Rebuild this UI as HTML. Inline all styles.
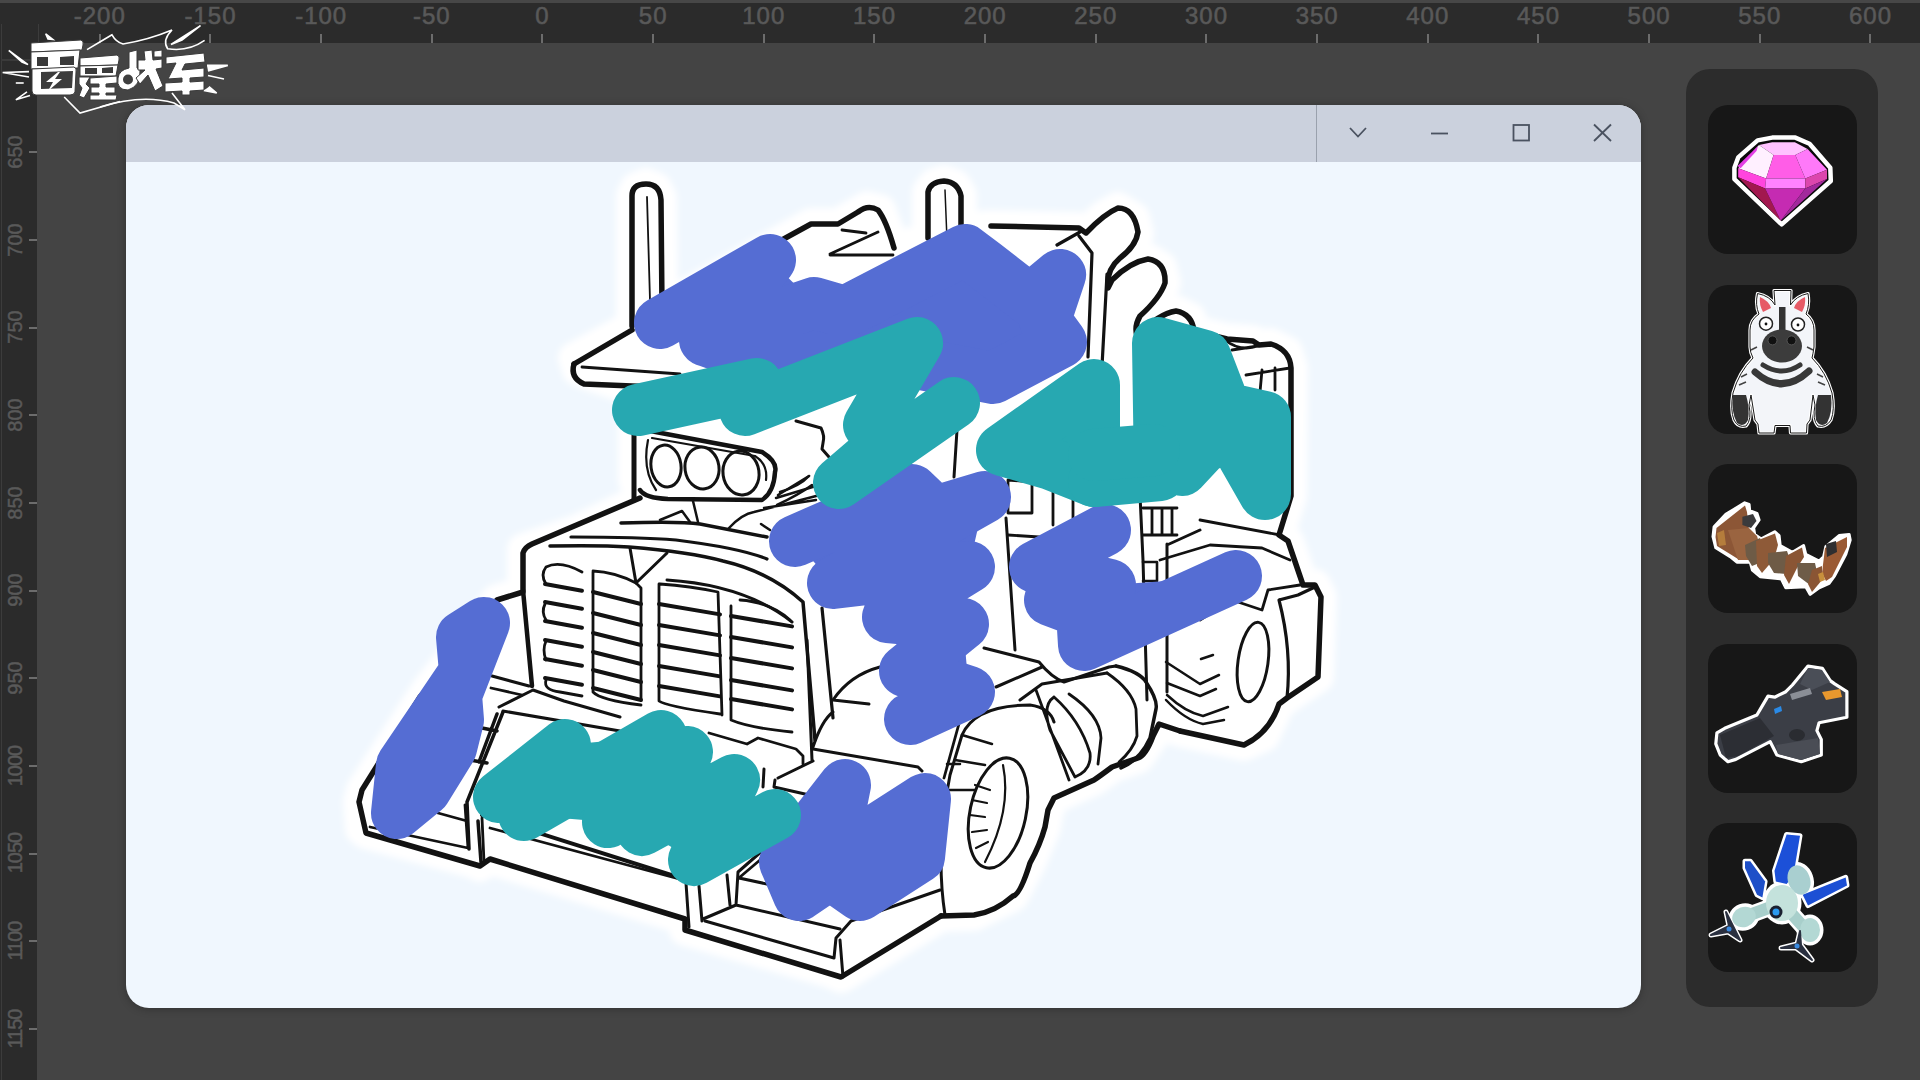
<!DOCTYPE html>
<html><head><meta charset="utf-8">
<style>
*{margin:0;padding:0;box-sizing:border-box}
html,body{width:1920px;height:1080px;overflow:hidden;background:#444444;font-family:"Liberation Sans",sans-serif}
#topbar{position:absolute;left:0;top:0;width:1920px;height:3px;background:#474747}
#rtop{position:absolute;left:0;top:3px;width:1920px;height:40px;background:#2b2b2b}
#rleft{position:absolute;left:0;top:3px;width:37px;height:1077px;background:#2b2b2b}
.tl{position:absolute;top:0px;width:80px;text-align:center;font-size:24px;letter-spacing:1px;text-indent:1px;color:#5a5a5a;line-height:26px;-webkit-text-stroke:0.6px #575757}
.tt{position:absolute;top:31px;width:2px;height:9px;background:#6c6c6c}
.ll{position:absolute;left:-25px;width:80px;height:26px;margin-top:-13px;text-align:center;font-size:20px;color:#5a5a5a;line-height:26px;transform:rotate(-90deg);-webkit-text-stroke:0.5px #575757}
.lt{position:absolute;left:29px;width:8px;height:2px;background:#6c6c6c}
#win{position:absolute;left:126px;top:105px;width:1515px;height:903px;border-radius:23px;overflow:hidden;background:#f0f7fe;box-shadow:0 1px 8px rgba(0,0,0,0.28)}
#title{position:absolute;left:0;top:0;width:1515px;height:57px;background:#cbd1dd}
#side{position:absolute;left:1686px;top:69px;width:192px;height:938px;border-radius:24px;background:#2c2c2c}
.card{position:absolute;left:22px;width:149px;height:149px;border-radius:20px;background:#171717}
svg.full{position:absolute;left:0;top:0}
</style></head><body>
<div id="topbar"></div>
<div id="rtop"><div class="tl" style="left:59.3px">-200</div><div class="tt" style="left:98.6px"></div>
<div class="tl" style="left:170.0px">-150</div><div class="tt" style="left:209.3px"></div>
<div class="tl" style="left:280.7px">-100</div><div class="tt" style="left:319.9px"></div>
<div class="tl" style="left:391.3px">-50</div><div class="tt" style="left:430.6px"></div>
<div class="tl" style="left:502.0px">0</div><div class="tt" style="left:541.2px"></div>
<div class="tl" style="left:612.7px">50</div><div class="tt" style="left:651.9px"></div>
<div class="tl" style="left:723.3px">100</div><div class="tt" style="left:762.6px"></div>
<div class="tl" style="left:834.0px">150</div><div class="tt" style="left:873.2px"></div>
<div class="tl" style="left:944.7px">200</div><div class="tt" style="left:983.9px"></div>
<div class="tl" style="left:1055.3px">250</div><div class="tt" style="left:1094.6px"></div>
<div class="tl" style="left:1166.0px">300</div><div class="tt" style="left:1205.2px"></div>
<div class="tl" style="left:1276.7px">350</div><div class="tt" style="left:1315.9px"></div>
<div class="tl" style="left:1387.3px">400</div><div class="tt" style="left:1426.6px"></div>
<div class="tl" style="left:1498.0px">450</div><div class="tt" style="left:1537.2px"></div>
<div class="tl" style="left:1608.6px">500</div><div class="tt" style="left:1647.9px"></div>
<div class="tl" style="left:1719.3px">550</div><div class="tt" style="left:1758.6px"></div>
<div class="tl" style="left:1830.0px">600</div><div class="tt" style="left:1869.2px"></div></div>
<div id="rleft">
<div class="ll" style="top:149.0px">650</div><div class="lt" style="top:148.2px"></div>
<div class="ll" style="top:236.7px">700</div><div class="lt" style="top:235.9px"></div>
<div class="ll" style="top:324.3px">750</div><div class="lt" style="top:323.6px"></div>
<div class="ll" style="top:412.0px">800</div><div class="lt" style="top:411.3px"></div>
<div class="ll" style="top:499.7px">850</div><div class="lt" style="top:498.9px"></div>
<div class="ll" style="top:587.4px">900</div><div class="lt" style="top:586.6px"></div>
<div class="ll" style="top:675.0px">950</div><div class="lt" style="top:674.3px"></div>
<div class="ll" style="top:762.7px;letter-spacing:-1px">1000</div><div class="lt" style="top:761.9px"></div>
<div class="ll" style="top:850.4px;letter-spacing:-1px">1050</div><div class="lt" style="top:849.6px"></div>
<div class="ll" style="top:938.0px;letter-spacing:-1px">1100</div><div class="lt" style="top:937.3px"></div>
<div class="ll" style="top:1025.7px;letter-spacing:-1px">1150</div><div class="lt" style="top:1025.0px"></div></div>
<div style="position:absolute;left:1px;top:24px;width:1.3px;height:1056px;background:#3c3c3c"></div><div style="position:absolute;left:37.5px;top:24px;width:1.3px;height:19px;background:#3c3c3c"></div><div style="position:absolute;left:1px;top:59px;width:30px;height:1.5px;background:#3a3a3a"></div>
<div id="win"><div id="title"></div></div>
<div id="side">
<div class="card" style="top:36px"></div>
<div class="card" style="top:216px"></div>
<div class="card" style="top:395px"></div>
<div class="card" style="top:575px"></div>
<div class="card" style="top:754px"></div>
</div>

<svg class="full" width="1920" height="1080" viewBox="0 0 1920 1080">
<defs>
<clipPath id="cv"><rect x="126" y="162" width="1515" height="846"/></clipPath>
<filter id="glow" x="-10%" y="-10%" width="120%" height="120%"><feGaussianBlur stdDeviation="3"/></filter>
</defs>

<g clip-path="url(#cv)">
<polygon points="574,358 632,326 632,196 636,188 646,184 656,188 661,198 662,308 811,224 838,224 867,207 880,210 894,248 928,238 928,192 934,184 944,181 955,185 961,195 961,228 991,226 1079,228 1086,232 1104,216 1118,208 1134,218 1138,234 1130,248 1109,269 1108,285 1130,267 1148,259 1161,267 1165,283 1158,297 1139,317 1137,334 1158,317 1176,311 1190,318 1194,331 1227,339 1253,341 1259,345 1271,344 1287,352 1292,368 1291,496 1279,535 1288,541 1303,585 1315,585 1321,597 1318,677 1287,698 1279,704 1264,736 1244,745 1180,731 1159,724 1153,736 1138,758 1112,767 1094,780 1054,798 1048,810 1045,827 1030,863 1013,896 974,915 941,916 841,977 830,972 685,930 685,919 490,859 480,866 472,862 366,833 361,829 359,802 362,790 427,690 497,600 523,592 523,549 578,530 642,499 634,480 634,390 590,375 578,370" fill="#ffffff" stroke="#ffffff" stroke-width="32" stroke-linejoin="round" filter="url(#glow)"/>
<polygon points="574,358 632,326 632,196 636,188 646,184 656,188 661,198 662,308 811,224 838,224 867,207 880,210 894,248 928,238 928,192 934,184 944,181 955,185 961,195 961,228 991,226 1079,228 1086,232 1104,216 1118,208 1134,218 1138,234 1130,248 1109,269 1108,285 1130,267 1148,259 1161,267 1165,283 1158,297 1139,317 1137,334 1158,317 1176,311 1190,318 1194,331 1227,339 1253,341 1259,345 1271,344 1287,352 1292,368 1291,496 1279,535 1288,541 1303,585 1315,585 1321,597 1318,677 1287,698 1279,704 1264,736 1244,745 1180,731 1159,724 1153,736 1138,758 1112,767 1094,780 1054,798 1048,810 1045,827 1030,863 1013,896 974,915 941,916 841,977 830,972 685,930 685,919 490,859 480,866 472,862 366,833 361,829 359,802 362,790 427,690 497,600 523,592 523,549 578,530 642,499 634,480 634,390 590,375 578,370" fill="#ffffff" stroke="#ffffff" stroke-width="22" stroke-linejoin="round"/>
<path d="M574,364 L632,330 M632,326 L632,196 Q632,184 646,184 Q660,184 661,200 L662,308" fill="none" stroke="#121212" stroke-width="5.5" stroke-linecap="round" stroke-linejoin="round"/>
<path d="M662,306 L811,224 L838,224 L858,212 Q868,204 878,210 Q886,220 894,248" fill="none" stroke="#121212" stroke-width="5.5" stroke-linecap="round" stroke-linejoin="round"/>
<path d="M574,364 Q570,378 584,384 L680,388" fill="none" stroke="#121212" stroke-width="5.5" stroke-linecap="round" stroke-linejoin="round"/>
<path d="M928,238 L928,192 Q930,182 944,181 Q958,182 961,196 L961,228" fill="none" stroke="#121212" stroke-width="5.5" stroke-linecap="round" stroke-linejoin="round"/>
<path d="M991,226 L1079,228 L1086,233 Q1104,214 1118,208 Q1134,208 1138,232 Q1136,246 1120,258 Q1106,270 1108,288 L1112,280 Q1130,262 1148,259 Q1166,262 1165,283 Q1160,298 1140,316 Q1134,326 1137,336 Q1158,314 1176,311 Q1192,314 1194,331" fill="none" stroke="#121212" stroke-width="5.5" stroke-linecap="round" stroke-linejoin="round"/>
<path d="M1194,331 L1227,339 L1253,341 L1259,345 L1271,344 Q1290,350 1291,368 L1291,496 L1279,535 L1288,541 L1303,585 L1315,585 L1321,597 L1318,677 L1287,698 L1279,704 Q1270,732 1244,745 L1180,731" fill="none" stroke="#121212" stroke-width="5.5" stroke-linecap="round" stroke-linejoin="round"/>
<path d="M1180,731 L1159,724 L1153,736 Q1146,755 1138,758 L1112,767 Q1100,776 1094,780 L1054,798 L1048,810 L1045,827 Q1040,845 1030,863 Q1020,895 1013,896 Q995,912 974,915 L941,916" fill="none" stroke="#121212" stroke-width="5.5" stroke-linecap="round" stroke-linejoin="round"/>
<path d="M941,916 L841,977 L685,930 L685,919 L490,859 L480,866 L366,833 L359,802 L362,790 L420,697 Q426,689 434,690" fill="none" stroke="#121212" stroke-width="5.5" stroke-linecap="round" stroke-linejoin="round"/>
<path d="M497,600 L523,592 L523,553 Q525,547 532,544 L640,498" fill="none" stroke="#121212" stroke-width="5.5" stroke-linecap="round" stroke-linejoin="round"/>
<path d="M523,590 L532,686" fill="none" stroke="#121212" stroke-width="4.5" stroke-linecap="round" stroke-linejoin="round"/>
<path d="M634,500 L634,390" fill="none" stroke="#121212" stroke-width="5" stroke-linecap="round" stroke-linejoin="round"/>
<path d="M647,197 L650,300" fill="none" stroke="#121212" stroke-width="1.8" stroke-linecap="round" stroke-linejoin="round"/>
<path d="M582,367 L680,374" fill="none" stroke="#121212" stroke-width="2.8" stroke-linecap="round" stroke-linejoin="round"/>
<path d="M830,254 L878,232 M842,230 L866,233 M830,255 L893,255" fill="none" stroke="#121212" stroke-width="2.8" stroke-linecap="round" stroke-linejoin="round"/>
<path d="M945,190 L947,240" fill="none" stroke="#121212" stroke-width="1.5" stroke-linecap="round" stroke-linejoin="round"/>
<path d="M1057,245 L1080,232 M1079,236 L1092,253 L1088,357 M1107,274 L1102,366" fill="none" stroke="#121212" stroke-width="3.2" stroke-linecap="round" stroke-linejoin="round"/>
<path d="M1232,350 L1258,346 M1246,375 L1290,368 M1275,368 L1275,390 M1262,370 L1260,392 M1225,340 Q1240,352 1258,346" fill="none" stroke="#121212" stroke-width="2.8" stroke-linecap="round" stroke-linejoin="round"/>
<path d="M634,432 Q636,428 645,430 L762,452 Q778,462 775,472 Q774,492 762,500 L668,499 Q645,498 640,490" fill="none" stroke="#121212" stroke-width="4.5" stroke-linecap="round" stroke-linejoin="round"/>
<path d="M648,440 Q642,470 656,490 M652,438 L755,456 Q768,464 766,480" fill="none" stroke="#121212" stroke-width="2.2" stroke-linecap="round" stroke-linejoin="round"/>
<ellipse cx="666" cy="466" rx="15" ry="21" fill="none" stroke="#121212" stroke-width="3" transform="rotate(-8 666 466)"/>
<ellipse cx="702" cy="468" rx="17" ry="21" fill="none" stroke="#121212" stroke-width="3" transform="rotate(-8 702 468)"/>
<ellipse cx="741" cy="473" rx="18" ry="22" fill="none" stroke="#121212" stroke-width="3" transform="rotate(-8 741 473)"/>
<path d="M621,523 Q680,521 700,524 L767,537" fill="none" stroke="#121212" stroke-width="3.5" stroke-linecap="round" stroke-linejoin="round"/>
<path d="M660,520 L682,511 L690,522 M693,501 L698,522 M729,528 Q742,514 754,512 L820,495 M778,495 L809,476 M776,498 L816,486 M761,524 L770,530 M764,508 L816,500" fill="none" stroke="#121212" stroke-width="2.5" stroke-linecap="round" stroke-linejoin="round"/>
<path d="M571,537 Q640,537 676,540 Q740,548 767,559" fill="none" stroke="#121212" stroke-width="3.2" stroke-linecap="round" stroke-linejoin="round"/>
<path d="M550,546 Q600,545 629,547 Q690,552 723,561 Q770,572 803,602 L815,740" fill="none" stroke="#121212" stroke-width="3.5" stroke-linecap="round" stroke-linejoin="round"/>
<path d="M822,608 L833,718" fill="none" stroke="#121212" stroke-width="3.2" stroke-linecap="round" stroke-linejoin="round"/>
<path d="M796,421 L821,428 Q825,436 823,443 L822,449 L829,457 M957,430 L954,477" fill="none" stroke="#121212" stroke-width="3" stroke-linecap="round" stroke-linejoin="round"/>
<path d="M780,492 Q800,486 809,476 M777,505 Q800,494 812,485" fill="none" stroke="#121212" stroke-width="2.5" stroke-linecap="round" stroke-linejoin="round"/>
<path d="M630,548 L636,583 L667,553" fill="none" stroke="#121212" stroke-width="3" stroke-linecap="round" stroke-linejoin="round"/>
<path d="M545,584 L582,590.7" fill="none" stroke="#121212" stroke-width="4" stroke-linecap="round" stroke-linejoin="round"/>
<path d="M545,602 L582,608.7" fill="none" stroke="#121212" stroke-width="4" stroke-linecap="round" stroke-linejoin="round"/>
<path d="M545,621 L582,627.7" fill="none" stroke="#121212" stroke-width="4" stroke-linecap="round" stroke-linejoin="round"/>
<path d="M545,640 L582,646.7" fill="none" stroke="#121212" stroke-width="4" stroke-linecap="round" stroke-linejoin="round"/>
<path d="M545,659 L582,665.7" fill="none" stroke="#121212" stroke-width="4" stroke-linecap="round" stroke-linejoin="round"/>
<path d="M545,678 L582,684.7" fill="none" stroke="#121212" stroke-width="4" stroke-linecap="round" stroke-linejoin="round"/>
<path d="M593,592 L641,604.0" fill="none" stroke="#121212" stroke-width="4" stroke-linecap="round" stroke-linejoin="round"/>
<path d="M593,613 L641,625.0" fill="none" stroke="#121212" stroke-width="4" stroke-linecap="round" stroke-linejoin="round"/>
<path d="M593,633 L641,645.0" fill="none" stroke="#121212" stroke-width="4" stroke-linecap="round" stroke-linejoin="round"/>
<path d="M593,652 L641,664.0" fill="none" stroke="#121212" stroke-width="4" stroke-linecap="round" stroke-linejoin="round"/>
<path d="M593,670 L641,682.0" fill="none" stroke="#121212" stroke-width="4" stroke-linecap="round" stroke-linejoin="round"/>
<path d="M593,688 L641,700.0" fill="none" stroke="#121212" stroke-width="4" stroke-linecap="round" stroke-linejoin="round"/>
<path d="M659,604 L720,614.4" fill="none" stroke="#121212" stroke-width="4" stroke-linecap="round" stroke-linejoin="round"/>
<path d="M659,625 L720,635.4" fill="none" stroke="#121212" stroke-width="4" stroke-linecap="round" stroke-linejoin="round"/>
<path d="M659,645 L720,655.4" fill="none" stroke="#121212" stroke-width="4" stroke-linecap="round" stroke-linejoin="round"/>
<path d="M659,666 L720,676.4" fill="none" stroke="#121212" stroke-width="4" stroke-linecap="round" stroke-linejoin="round"/>
<path d="M659,686 L720,696.4" fill="none" stroke="#121212" stroke-width="4" stroke-linecap="round" stroke-linejoin="round"/>
<path d="M731,616 L792,626.4" fill="none" stroke="#121212" stroke-width="4" stroke-linecap="round" stroke-linejoin="round"/>
<path d="M731,637 L792,647.4" fill="none" stroke="#121212" stroke-width="4" stroke-linecap="round" stroke-linejoin="round"/>
<path d="M731,658 L792,668.4" fill="none" stroke="#121212" stroke-width="4" stroke-linecap="round" stroke-linejoin="round"/>
<path d="M731,680 L792,690.4" fill="none" stroke="#121212" stroke-width="4" stroke-linecap="round" stroke-linejoin="round"/>
<path d="M731,699 L792,709.4" fill="none" stroke="#121212" stroke-width="4" stroke-linecap="round" stroke-linejoin="round"/>
<path d="M582,572 Q560,560 546,567 Q540,575 546,584 M545,604 Q541,612 546,620 M546,641 Q542,650 546,660 M546,680 Q543,690 560,692 L582,696" fill="none" stroke="#121212" stroke-width="2.8" stroke-linecap="round" stroke-linejoin="round"/>
<path d="M593,571 Q615,572 636,583 L641,588 L641,699 M593,572 L593,692 Q600,700 641,705" fill="none" stroke="#121212" stroke-width="2.8" stroke-linecap="round" stroke-linejoin="round"/>
<path d="M659,584 L659,701 Q665,706 720,714 M660,584 Q690,586 718,592 L722,715" fill="none" stroke="#121212" stroke-width="2.8" stroke-linecap="round" stroke-linejoin="round"/>
<path d="M731,606 L731,720 Q750,728 792,732 M740,600 Q770,602 790,620" fill="none" stroke="#121212" stroke-width="2.8" stroke-linecap="round" stroke-linejoin="round"/>
<path d="M667,580 Q745,585 792,622" fill="none" stroke="#121212" stroke-width="3" stroke-linecap="round" stroke-linejoin="round"/>
<path d="M709,733 L747,744 L758,738 L796,749 L803,756 L803,764" fill="none" stroke="#121212" stroke-width="2.8" stroke-linecap="round" stroke-linejoin="round"/>
<path d="M807,640 L812,760 M833,700 Q850,675 880,667 M833,700 L869,704 M813,747 Q822,720 833,712" fill="none" stroke="#121212" stroke-width="3" stroke-linecap="round" stroke-linejoin="round"/>
<path d="M370,827 L468,848 L465,805" fill="none" stroke="#121212" stroke-width="2.8" stroke-linecap="round" stroke-linejoin="round"/>
<path d="M482,818 L484,862" fill="none" stroke="#121212" stroke-width="2.8" stroke-linecap="round" stroke-linejoin="round"/>
<path d="M492,676 L529,686 M499,707 L533,690 L564,701 L620,717 M503,711 L620,731" fill="none" stroke="#121212" stroke-width="3" stroke-linecap="round" stroke-linejoin="round"/>
<path d="M482,815 L687,880" fill="none" stroke="#121212" stroke-width="4" stroke-linecap="round" stroke-linejoin="round"/>
<path d="M490,828 L683,880" fill="none" stroke="#121212" stroke-width="2.8" stroke-linecap="round" stroke-linejoin="round"/>
<path d="M686,883 L689,927 M699,886 L702,921 M703,919 L736,905 L840,929 M736,905 L738,872 L762,851 M727,875 L730,905 M739,878 L776,886" fill="none" stroke="#121212" stroke-width="3" stroke-linecap="round" stroke-linejoin="round"/>
<path d="M503,712 L467,802 L469,849 M497,714 L479,762 M477,727 L497,731 M470,760 L487,763 M478,821 L481,862" fill="none" stroke="#121212" stroke-width="3.5" stroke-linecap="round" stroke-linejoin="round"/>
<path d="M438,813 L467,821 M491,688 L522,695" fill="none" stroke="#121212" stroke-width="2.8" stroke-linecap="round" stroke-linejoin="round"/>
<path d="M813,749 L918,767 L922,771 M778,778 L813,761 M775,780 L774,787 L902,816 M764,769 L763,787" fill="none" stroke="#121212" stroke-width="3" stroke-linecap="round" stroke-linejoin="round"/>
<path d="M705,921 L834,958 L836,938 L851,921 L940,890 M840,940 L843,977" fill="none" stroke="#121212" stroke-width="3" stroke-linecap="round" stroke-linejoin="round"/>
<path d="M740,877 L760,860 L830,880 M760,860 L770,840" fill="none" stroke="#121212" stroke-width="2.8" stroke-linecap="round" stroke-linejoin="round"/>
<ellipse cx="998" cy="813" rx="28" ry="56" fill="none" stroke="#121212" stroke-width="3" transform="rotate(12 998 813)"/>
<path d="M1003,765 Q1012,810 985,862 M975,785 L990,790 M972,800 L987,803 M970,815 L985,817 M972,832 L987,830 M976,848 L988,842" fill="none" stroke="#121212" stroke-width="2.2" stroke-linecap="round" stroke-linejoin="round"/>
<path d="M945,915 Q935,850 950,775 L962,735 Q975,705 1030,705 Q1050,708 1054,722" fill="none" stroke="#121212" stroke-width="3" stroke-linecap="round" stroke-linejoin="round"/>
<path d="M962,735 L992,744 M955,760 L985,765 M948,790 L975,790 M947,764 L960,764" fill="none" stroke="#121212" stroke-width="2.5" stroke-linecap="round" stroke-linejoin="round"/>
<path d="M960,720 L944,778" fill="none" stroke="#121212" stroke-width="2.8" stroke-linecap="round" stroke-linejoin="round"/>
<path d="M984,648 L1039,662 Q1052,678 1064,682 L1109,667 L1116,666" fill="none" stroke="#121212" stroke-width="3" stroke-linecap="round" stroke-linejoin="round"/>
<path d="M996,687 L1042,667 M1020,700 L1042,684 L1107,673" fill="none" stroke="#121212" stroke-width="3" stroke-linecap="round" stroke-linejoin="round"/>
<path d="M1036,690 L1069,780 M1054,697 Q1042,705 1050,730 L1075,777 M1054,697 Q1080,720 1090,753 Q1092,770 1075,777" fill="none" stroke="#121212" stroke-width="2.8" stroke-linecap="round" stroke-linejoin="round"/>
<path d="M1069,694 Q1100,715 1101,738 L1098,764" fill="none" stroke="#121212" stroke-width="2.8" stroke-linecap="round" stroke-linejoin="round"/>
<path d="M1107,673 Q1132,690 1136,709 L1137,736 Q1133,750 1119,762" fill="none" stroke="#121212" stroke-width="2.8" stroke-linecap="round" stroke-linejoin="round"/>
<path d="M1116,666 Q1140,672 1146,682 Q1158,700 1156,709 L1150,738 Q1140,760 1121,768" fill="none" stroke="#121212" stroke-width="3.5" stroke-linecap="round" stroke-linejoin="round"/>
<path d="M1006,518 L1015,650" fill="none" stroke="#121212" stroke-width="3" stroke-linecap="round" stroke-linejoin="round"/>
<path d="M1008,480 L1032,482 L1032,513 L1008,513 Z M1008,535 L1039,537 M1053,492 L1053,525 M1073,494 L1073,518" fill="none" stroke="#121212" stroke-width="2.8" stroke-linecap="round" stroke-linejoin="round"/>
<path d="M1140,495 L1143,560 L1147,700 M1167,544 L1167,692 M1167,545 L1200,530" fill="none" stroke="#121212" stroke-width="3" stroke-linecap="round" stroke-linejoin="round"/>
<path d="M1143,508 L1177,508 M1143,535 L1177,535 M1152,508 L1152,535 M1162,508 L1162,535 M1172,508 L1172,535" fill="none" stroke="#121212" stroke-width="2.8" stroke-linecap="round" stroke-linejoin="round"/>
<path d="M1143,562 L1157,562 L1157,581 L1143,581" fill="none" stroke="#121212" stroke-width="2.6" stroke-linecap="round" stroke-linejoin="round"/>
<ellipse cx="1253" cy="662" rx="15" ry="40" fill="none" stroke="#121212" stroke-width="3" transform="rotate(8 1253 662)"/>
<path d="M1279,600 Q1292,650 1287,698 M1279,600 L1298,595 L1315,587" fill="none" stroke="#121212" stroke-width="3.2" stroke-linecap="round" stroke-linejoin="round"/>
<path d="M1166,662 L1200,684 L1219,675 M1167,683 L1200,696 L1216,689 M1167,695 Q1185,712 1203,716 L1228,707 M1166,700 Q1185,720 1203,724 L1224,720 M1201,659 L1213,655" fill="none" stroke="#121212" stroke-width="2.5" stroke-linecap="round" stroke-linejoin="round"/>
<path d="M1160,610 L1200,620 L1232,600 L1262,610 L1268,590 L1300,585" fill="none" stroke="#121212" stroke-width="2.8" stroke-linecap="round" stroke-linejoin="round"/>
<path d="M1160,560 L1210,545 L1262,548 L1290,560 M1200,520 L1280,535 M1240,470 L1282,462" fill="none" stroke="#121212" stroke-width="2.8" stroke-linecap="round" stroke-linejoin="round"/>
</g>
<g clip-path="url(#cv)" stroke-linecap="round" stroke-linejoin="round">
<polygon points="660,323 770,260 814,303 965,250 1060,275 1061,342 993,378 760,360 705,340" fill="#556dd3"/>
<polyline points="660,323 770,260 705,340 814,303 845,312 965,250 985,265 1030,300 1060,275 1045,320 1061,342 993,378 900,360 760,360 705,340" fill="none" stroke="#556dd3" stroke-width="52"/>
<polygon points="795,541 912,490 935,512 985,497 969,567 963,624 969,692 910,719 905,671 888,617 833,583" fill="#556dd3"/>
<polyline points="795,541 912,490 935,512 985,497 833,583 969,567 888,617 963,624 905,671 969,692 910,719" fill="none" stroke="#556dd3" stroke-width="52"/>
<polygon points="1105,530 1035,567 1050,600 1082,612 1084,645 1236,576 1110,585" fill="#556dd3"/>
<polyline points="1105,530 1035,567 1110,585 1050,600 1082,612 1084,645 1236,576" fill="none" stroke="#556dd3" stroke-width="52"/>
<polygon points="484,623 456,695 458,720 451,748 425,790 397,813 402,765 465,672 462,637" fill="#556dd3"/>
<polyline points="484,623 456,695 458,720 451,748 425,790 397,813 402,765 465,672 462,637 484,623" fill="none" stroke="#556dd3" stroke-width="52"/>
<polygon points="785,862 845,785 870,810 925,799 919,857 860,895 830,874 799,895" fill="#556dd3"/>
<polyline points="799,895 785,862 845,785 830,860 925,799 919,857 860,895 830,874 799,895" fill="none" stroke="#556dd3" stroke-width="52"/>
<polyline points="638,410 757,384 745,410 917,343 869,425 895,435 839,483 954,403" fill="none" stroke="#27a8b1" stroke-width="52"/>
<polygon points="1002,450 1094,385 1094,481 1051,464" fill="#27a8b1"/>
<polyline points="1002,450 1094,385 1094,481 1051,464 1002,450" fill="none" stroke="#27a8b1" stroke-width="52"/>
<polygon points="1160,475 1158,343 1205,356 1225,408 1265,417 1265,494 1237,445 1210,440 1182,470" fill="#27a8b1"/>
<polyline points="1094,481 1160,475 1158,343 1205,356 1225,408 1265,417 1265,494 1237,445 1210,440 1182,470 1182,350" fill="none" stroke="#27a8b1" stroke-width="52"/>
<polyline points="1094,455 1154,450" fill="none" stroke="#27a8b1" stroke-width="52"/>
<polygon points="499,797 565,745 661,736 687,752 734,780 775,815 694,860 642,830 608,822 524,815" fill="#27a8b1"/>
<polyline points="499,797 565,745 524,815 661,736 608,822 687,752 642,830 734,780 694,860 775,815" fill="none" stroke="#27a8b1" stroke-width="52"/>
</g>
<g id="tbicons" fill="none" stroke="#4a5260" stroke-width="1.8">
<line x1="1316.5" y1="105" x2="1316.5" y2="162" stroke="#9aa1ad" stroke-width="1"/>
<polyline points="1350,128 1358,136.5 1366,128"/>
<line x1="1431" y1="133.5" x2="1448" y2="133.5"/>
<rect x="1513.5" y="125" width="15.5" height="15.5"/>
<line x1="1594" y1="124.5" x2="1611" y2="141"/><line x1="1611" y1="124.5" x2="1594" y2="141"/>
</g>

<g id="logo">
<g fill="none" stroke="#ffffff" stroke-width="1.6" stroke-linejoin="miter">
<path d="M87,49.6 Q100,42 112,34.8 Q116,42 123,44 Q148,40 172,30 Q162,40 167.6,48.7 Q188,52 204.6,40.4"/>
<path d="M200.5,25.6 L171,44.5 L182,40 Z" fill="#fff"/>
<path d="M207,65.4 L227.8,65.4 L208,71" fill="#fff"/>
<path d="M208,75.5 L224,79"/>
<path d="M203.7,90.4 L216.7,93 L209,86.7" fill="#fff"/>
<path d="M100,107 Q141.7,94 174,103 L185,109.8 L172,93"/>
<path d="M64.2,97 L80,113 L120,101.5"/>
<path d="M8.8,50.5 L28,64.6 L22,62 Z" fill="#fff"/>
<path d="M2.6,72.5 L29,71.6 M2.6,72.5 L29,77"/>
<path d="M15.8,83 L23.7,83"/>
<path d="M15.8,99.8 L27,91.8 M15.8,99.8 L30,95.4"/>
<path d="M45.7,33.8 L52.8,39.5 L48,39 Z" fill="#fff"/>
</g>
<g fill="#ffffff" stroke="#3a3a3a" stroke-width="1">
<!-- 雷 -->
<path d="M31,43 L81,40 Q84,41 83,45 L82,50 L31,52 Z"/>
<path d="M31,52 L80,50 L78,68 L31,69 Z"/>
<path d="M32,69 L74,67 Q77,68 76,72 L75,92 Q74,95 70,95 L36,95 Q32,95 32,91 Z"/>
<!-- 霆 -->
<path d="M80,58 L117,55 Q120,56 119,60 L118,65 L80,66 Z"/>
<path d="M80,66 L118,65 L116,76 L80,76 Z"/>
<path d="M79,77 L90,77 L86,84 L90,88 L84,98 L79,96 L82,88 L79,84 Z"/>
<path d="M90,78 L117,76 L117,83 L106,84 L106,87 L115,87 L115,93 L106,93 L106,95 L117,95 L116,100 L90,100 L90,95 L99,95 L99,93 L91,93 L91,87 L99,87 L99,84 L90,84 Z"/>
<!-- 战 -->
<path d="M129,52 L137,50 L137,68 L140,70 Q141,86 128,90 Q116,90 118,78 Q119,70 129,68 Z"/>
<path d="M138,60 L145,60 L144,51 L152,50 L153,60 L162,59 L162,68 L156,69 L163,86 L155,91 L148,75 L140,84 L136,78 L145,70 L138,70 Z"/>
<path d="M154,51 L162,50 L162,57 L154,57 Z"/>
<!-- 车 -->
<path d="M166,57 L204,53 L205,62 L185,64 L182,70 L204,68 L204,77 L190,78 L190,82 L204,81 L204,90 L190,91 L190,95 L182,95 L182,91 L165,92 L165,83 L182,82 L182,78 L168,79 L176,63 L166,64 Z"/>
</g>
<path d="M41,72 L73,71 L72,88 L41,89 Z" fill="#3c3c3c"/>
<path d="M58,72 L46,82 L53,82 L48,91 L62,79 L55,79 L60,72 Z" fill="#ffffff"/>
<path d="M37,57 L48,57 L48,66 L37,66 Z M60,57 L74,56 L74,65 L60,65 Z" fill="#3a3a3a"/>
<path d="M85,68 L97,68 L97,74 L85,74 Z M102,68 L113,67 L113,73 L102,73 Z" fill="#3a3a3a"/>
<circle cx="128" cy="79.5" r="5" fill="#3f3f3f"/>
</g>

<g id="gem">
<polygon points="1757.6,140.4 1772.2,137.6 1795.3,137.6 1809.5,143.7 1830.3,167.8 1830.8,181 1781.7,224.4 1734.4,179.1 1734.4,167.8 1738.2,157.4" fill="#0a0a0a" stroke="#ffffff" stroke-width="4.5" stroke-linejoin="round"/>
<polygon points="1759,145.1 1772.2,142.3 1794.9,142.3 1807.6,148.9 1795.3,155 1773.6,155" fill="#ffc2ff"/>
<polygon points="1738.2,168.2 1758,146 1759,145.1 1773.6,155 1766.1,178.6" fill="#fff0ff"/>
<polygon points="1737.5,166 1758,146 1756.5,151 1740.6,168.2" fill="#e23ee4"/>
<polygon points="1773.6,155 1795.3,155 1805.3,178.6 1766.1,178.6" fill="#ff5de7"/>
<polygon points="1795.3,155 1807.6,148.9 1827,169.7 1805.3,178.6" fill="#ff79f9"/>
<polygon points="1738.2,168.2 1766.1,178.6 1765.1,188.5 1738.2,177.2" fill="#ff45de"/>
<polygon points="1766.1,178.6 1805.3,178.6 1805.3,188.5 1765.1,188.5" fill="#ff82ff"/>
<polygon points="1805.3,178.6 1827,169.7 1827,179.1 1805.3,188.5" fill="#dc46ad"/>
<polygon points="1738.2,177.2 1765.1,188.5 1780.7,220.7" fill="#a2184f"/>
<polygon points="1765.1,188.5 1805.3,188.5 1780.7,220.7" fill="#c52bb2"/>
<polygon points="1805.3,188.5 1827,179.1 1780.7,220.7" fill="#a2299c"/>
</g>
<g id="zebra">
<path id="zsil" d="M1757.5,293.5 Q1770,296 1775,305 L1774,290.5 L1791,290.5 L1790.5,305 Q1796,296 1808,293.5 Q1810,305 1806,314 Q1814,320 1814,330 L1814,347 Q1813,354 1812,358 Q1826,372 1832,393 Q1835,410 1831,420 Q1826,428 1818,426 Q1812,420 1815,405 L1813,395 L1810,420 L1807,424 L1806.5,433 L1790.5,433 L1790,425.5 L1775,425.5 L1774,433 L1759,433 L1758,424 L1755,420 L1751,395 L1749,405 Q1752,420 1746,426 Q1738,428 1734,420 Q1730,410 1733,393 Q1739,372 1753,358 Q1750,352 1750,347 L1750,330 Q1750,320 1759,314 Q1755,305 1757.5,293.5 Z" fill="#f3f5f9" stroke="#ffffff" stroke-width="3.2" stroke-linejoin="round"/>
<path d="M1757.5,293.5 Q1770,296 1775,305 L1774,290.5 L1791,290.5 L1790.5,305 Q1796,296 1808,293.5 Q1810,305 1806,314 Q1814,320 1814,330 L1814,347 Q1813,354 1812,358 Q1826,372 1832,393 Q1835,410 1831,420 Q1826,428 1818,426 Q1812,420 1815,405 L1813,395 L1810,420 L1807,424 L1806.5,433 L1790.5,433 L1790,425.5 L1775,425.5 L1774,433 L1759,433 L1758,424 L1755,420 L1751,395 L1749,405 Q1752,420 1746,426 Q1738,428 1734,420 Q1730,410 1733,393 Q1739,372 1753,358 Q1750,352 1750,347 L1750,330 Q1750,320 1759,314 Q1755,305 1757.5,293.5 Z" fill="none" stroke="#1a1a1a" stroke-width="1"/>
<path d="M1760,297 Q1769,301 1771,308 L1763,312 Q1759,305 1760,297 Z" fill="#e65a66"/>
<path d="M1805,297 Q1796,301 1794,308 L1802,312 Q1806,305 1805,297 Z" fill="#e65a66"/>
<rect x="1779" y="307" width="6.5" height="24" fill="#333"/>
<circle cx="1766" cy="323.7" r="6.5" fill="#fff" stroke="#222" stroke-width="1.5"/>
<circle cx="1798" cy="324.5" r="6.5" fill="#fff" stroke="#222" stroke-width="1.5"/>
<circle cx="1766" cy="324" r="1.4" fill="#111"/><circle cx="1798" cy="325" r="1.4" fill="#111"/>
<ellipse cx="1782" cy="346" rx="20" ry="16.5" fill="#3c3c3c"/>
<circle cx="1772.5" cy="340.4" r="4.5" fill="#111" stroke="#555" stroke-width="1"/>
<circle cx="1791.5" cy="340.4" r="4.5" fill="#111" stroke="#555" stroke-width="1"/>
<path d="M1763,365 Q1782,377 1800,365" fill="none" stroke="#383838" stroke-width="5" stroke-linecap="round"/>
<path d="M1755,372 Q1782,396 1809,371" fill="none" stroke="#383838" stroke-width="7" stroke-linecap="round"/>
<path d="M1733,395 Q1731,412 1737,423 Q1744,428 1748,420 Q1750,408 1746,395 Z" fill="#333"/>
<path d="M1831,395 Q1833,412 1827,423 Q1820,428 1816,420 Q1814,408 1818,395 Z" fill="#333"/>
<path d="M1741,377 L1747,374 M1739,385 L1746,382 M1823,377 L1817,374 M1825,385 L1818,382 M1751,350 L1757,347 M1813,350 L1807,347" stroke="#444" stroke-width="1.6"/>
</g>
<g id="crank" stroke-linejoin="round">
<polygon points="1714.1,526.7 1725.8,514.4 1744.7,502.8 1749.1,504.4 1749.7,510.6 1756.9,513.3 1759.1,520 1753.6,527.8 1754.7,534.4 1761.3,538.9 1774.7,531.7 1779.1,535.6 1780.2,545.6 1792.4,552.2 1803.6,545.6 1805.8,554.4 1819.1,561.1 1823.6,556.7 1825.8,546.7 1839.1,535.6 1849.1,534.4 1850.2,540 1845.8,554.4 1834.7,575.6 1829.1,583.3 1819.1,587.8 1810.2,594.4 1805.8,586.7 1785.8,587.8 1781.3,578.9 1760.2,576.7 1752.4,570 1750.2,562.2 1736.9,562.2 1730.2,556.7 1715.8,547.8 1713,536.7" fill="#ffffff" stroke="#ffffff" stroke-width="3"/>
<polygon points="1716.5,528 1745,505.5 1747,512 1749,530 1745,540 1738,559 1730,554 1717,546 1715.5,537" fill="#8c5636"/>
<polygon points="1742.4,516.7 1753,514 1756.5,521 1751,528 1742.4,525" fill="#3a3a3c"/>
<polygon points="1728,530 1749,528 1757,536 1760,546 1752,560 1738,560" fill="#9a6440"/>
<polygon points="1745,545 1760,538 1765,552 1762,562 1752,566 1746,556" fill="#6e5b46"/>
<polygon points="1756,541 1775,533.5 1778,545 1774,559 1762,573 1757,566" fill="#8e5a38"/>
<polygon points="1768,553 1787,551 1791,563 1786,574 1774,573 1768,563" fill="#6e5b46"/>
<polygon points="1786,556 1802,547.5 1804,557 1797,568 1789,584 1784,575" fill="#8a5534"/>
<polygon points="1797,563 1815,563 1818,577 1810,585 1798,576" fill="#6e5c48"/>
<polygon points="1812,570 1822,566 1822,580 1812,592 1808,584" fill="#8a5534"/>
<polygon points="1825,548 1847,537 1847,547 1843,555 1832,577 1826,581 1822,573" fill="#9a5a34"/>
<polygon points="1826,544 1836,541 1837,552 1827,557" fill="#2e2e30"/>
<polygon points="1717,533 1724,530 1726,545 1719,546" fill="#b57d3c"/>
<polygon points="1818,574 1823,572 1825,580 1820,582" fill="#c8903c"/>
</g>
<g id="gun" stroke-linejoin="round">
<polygon points="1716.9,732.8 1724.7,728.3 1756.9,715 1760.2,709.4 1768,696.1 1774.7,697.2 1785.8,691.7 1792.4,685 1808,666.1 1822.4,668.3 1830.2,680.6 1834.7,683.9 1846.9,691.7 1846.9,717.2 1819.1,722.8 1816.9,730.6 1821.3,739.4 1821.3,755 1801.3,761.7 1776.9,755 1770.2,741.7 1735.8,759.4 1728,761.7 1720.2,755 1715.8,743.9" fill="#3b3e46" stroke="#ffffff" stroke-width="3.2"/>
<polygon points="1720,735 1760,718 1774,736 1738,756 1726,758" fill="#2c2e34"/>
<polygon points="1776,745 1818,738 1820,754 1801,760 1778,754" fill="#4a4d55"/>
<polygon points="1808,668 1822,670 1830,682 1812,690 1800,684" fill="#4a4e57"/>
<polygon points="1822,692 1840,689 1842,697 1826,700" fill="#e8982e"/>
<polygon points="1774,709 1781,706 1782,711 1775,714" fill="#2a8ae6"/>
<polygon points="1790,694 1810,688 1812,694 1792,700" fill="#8a8e96"/>
<ellipse cx="1797" cy="735" rx="8" ry="6" fill="#2a2c31"/>
</g>
<g id="robot" stroke-linejoin="round">
<g fill="#ffffff" stroke="#ffffff" stroke-width="5" stroke-linecap="round">
<polygon points="1786.6,834.4 1800,835.7 1793.3,876 1786.6,884.1 1775.8,881.4 1774.5,870.7"/>
<polygon points="1745,861.3 1750.3,861.3 1765.1,881.4 1762.4,897.5 1757,894.8 1745,868"/>
<polygon points="1802.7,894.8 1845.7,877.4 1847,885.4 1808,905.6"/>
<path d="M1782,903 L1744,917 M1782,903 L1808,932" stroke-width="17" fill="none"/>
<ellipse cx="1799" cy="880" rx="12" ry="16" transform="rotate(-20 1799 880)"/>
<ellipse cx="1782" cy="903" rx="17" ry="19"/>
<ellipse cx="1744" cy="917" rx="13" ry="11" transform="rotate(-20 1744 917)"/>
<ellipse cx="1810" cy="930" rx="11" ry="13"/>
<polygon points="1711,935 1729,926 1726,912 1733,926 1740,940 1728,932"/>
<polygon points="1781,948 1797,944 1800,931 1801,945 1812,960 1796,948"/>
</g>
<polygon points="1786.6,834.4 1800,835.7 1793.3,876 1786.6,884.1 1775.8,881.4 1774.5,870.7" fill="#1c50d8"/>
<polygon points="1745,861.3 1750.3,861.3 1765.1,881.4 1762.4,897.5 1757,894.8 1745,868" fill="#1e4fc8"/>
<polygon points="1802.7,894.8 1845.7,877.4 1847,885.4 1808,905.6" fill="#1c4fd4"/>
<ellipse cx="1799" cy="880" rx="11" ry="15" fill="#a9cfd0" transform="rotate(-20 1799 880)"/>
<path d="M1782,903 L1744,917 M1782,903 L1808,932" stroke="#a8cfcb" stroke-width="12" fill="none" stroke-linecap="round"/>
<ellipse cx="1744" cy="917" rx="12" ry="10" fill="#b3d8d4" transform="rotate(-20 1744 917)"/>
<ellipse cx="1810" cy="930" rx="10" ry="12" fill="#b3d8d4"/>
<ellipse cx="1782" cy="903" rx="16" ry="18" fill="#c4e2dc"/>
<polygon points="1711,935 1729,926 1726,912 1733,926 1740,940 1728,932" fill="#2a3040" stroke="#2a3040" stroke-width="2"/>
<polygon points="1781,948 1797,944 1800,931 1801,945 1812,960 1796,948" fill="#2a3040" stroke="#2a3040" stroke-width="2"/>
<circle cx="1776" cy="912" r="6.5" fill="#1a2030"/>
<circle cx="1776" cy="912" r="3.5" fill="#2a9af0"/>
<circle cx="1729" cy="929" r="2.5" fill="#3a8ae0"/><circle cx="1797" cy="946" r="2.5" fill="#3a8ae0"/>
</g>

</svg></body></html>
